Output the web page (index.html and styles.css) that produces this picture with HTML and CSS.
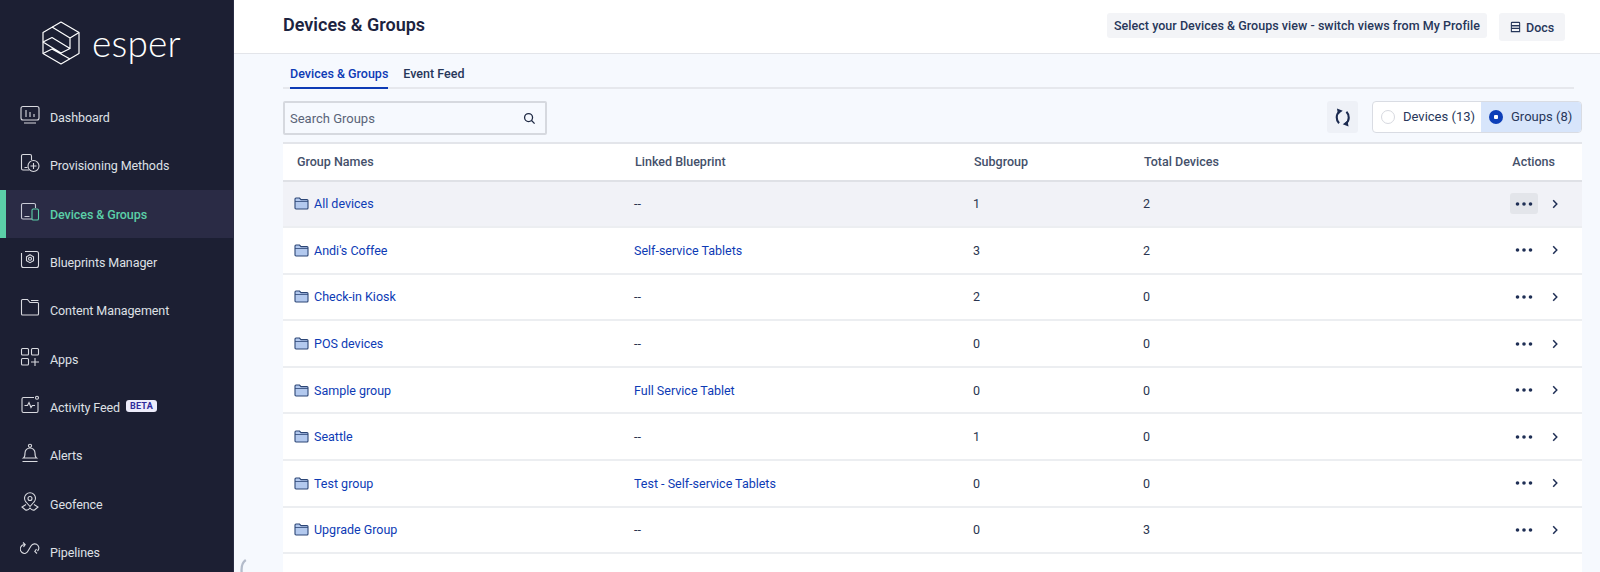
FILE: index.html
```html
<!DOCTYPE html>
<html lang="en">
<head>
<meta charset="utf-8">
<title>Devices &amp; Groups</title>
<link rel="stylesheet" href="styles.css">
</head>
<body>
<svg class="defs" width="0" height="0" aria-hidden="true">
  <symbol id="folder" viewBox="0 0 15 13"><path d="M1 3V2a1 1 0 0 1 1-1h3.500l1.500 1.600h6a1 1 0 0 1 1 1V11a1 1 0 0 1-1 1H2a1 1 0 0 1-1-1z" fill="#b3c9ee" stroke="#2c4676" stroke-width="1.100"/><path d="M1 4.500h13" stroke="#2c4676" stroke-width=".8"/></symbol>
  <symbol id="dots" viewBox="0 0 18 4"><circle cx="2.500" cy="2" r="1.800"/><circle cx="9" cy="2" r="1.800"/><circle cx="15.500" cy="2" r="1.800"/></symbol>
  <symbol id="chev" viewBox="0 0 6 10"><path d="M1.200 1.200 4.800 5 1.200 8.800" fill="none" stroke="#1f2f55" stroke-width="1.500"/></symbol>
</svg>
<div class="app">
  <aside class="sidebar">
    <div class="logo">
      <svg class="logo-mark" viewBox="0 0 40 44" fill="none" stroke="#fff" stroke-width="1.200" stroke-linejoin="round">
        <path d="M20 1 38 11.500v21L20 43 2 32.500v-21z"/>
        <path d="M11 6 29 17V28M29 17 38 11.500M2 21 11 16.500 29 27.500M2 21 20 32 29 27.500M2 32.500 11 28 29 38"/>
      </svg>
      <span class="logo-text">esper</span>
    </div>
    <nav class="nav">
      <a class="nav-item"><svg class="ico" viewBox="0 0 20 20"><rect x="1" y="1.500" width="18" height="13.500" rx="2"/><path d="M6 5v7M10 7v5M14 9v3M4 18h12"/></svg><span>Dashboard</span></a>
      <a class="nav-item"><svg class="ico" viewBox="0 0 20 20"><path d="M9 17H3a1.500 1.500 0 0 1-1.500-1.500V3A1.500 1.500 0 0 1 3 1.500h7A1.500 1.500 0 0 1 11.500 3v4M4.500 14.500h3"/><circle cx="13.500" cy="13" r="5.500"/><path d="M13.500 10v6M10.500 13h6"/></svg><span>Provisioning Methods</span></a>
      <a class="nav-item active"><svg class="ico" viewBox="0 0 20 20"><path d="M12 17H3a1.500 1.500 0 0 1-1.500-1.500V3A1.500 1.500 0 0 1 3 1.500h11A1.500 1.500 0 0 1 15.500 3v3M4.500 14.500h5"/><rect class="teal" x="12" y="7" width="6.500" height="11" rx="1.300"/></svg><span>Devices &amp; Groups</span></a>
      <a class="nav-item"><svg class="ico" viewBox="0 0 20 20"><path d="M5 1.500h11.500a2 2 0 0 1 2 2v12a2 2 0 0 1-2 2H3.500a2 2 0 0 1-2-2V3"/><path d="M10 4.700l3.500 2v4l-3.500 2-3.500-2v-4z"/><circle cx="10" cy="8.700" r="1.500"/></svg><span>Blueprints Manager</span></a>
      <a class="nav-item"><svg class="ico" viewBox="0 0 20 20"><path d="M1.500 16V2.500a1 1 0 0 1 1-1h5l2.500 3h7.500a1 1 0 0 1 1 1V16a1 1 0 0 1-1 1h-15a1 1 0 0 1-1-1zM11 2.500h7.500"/></svg><span>Content Management</span></a>
      <a class="nav-item"><svg class="ico" viewBox="0 0 20 20"><rect x="1.500" y="1.500" width="7" height="6.500" rx="1"/><rect x="11.500" y="1.500" width="7" height="6.500" rx="1"/><rect x="1.500" y="11.500" width="7" height="6.500" rx="1"/><path d="M15 11v8M11 15h8"/></svg><span>Apps</span></a>
      <a class="nav-item"><svg class="ico" viewBox="0 0 20 20"><path d="M14 2.500H3.500a1.500 1.500 0 0 0-1.500 1.500v12a1.500 1.500 0 0 0 1.500 1.500h13a1.500 1.500 0 0 0 1.500-1.500V7M4.500 10.500h3l1.500-3 2 5 1.300-2h2.700"/><circle cx="17" cy="2.700" r="1.500"/></svg><span>Activity Feed</span><b class="beta">BETA</b></a>
      <a class="nav-item"><svg class="ico" viewBox="0 0 20 20"><path d="M3.500 15c1.500-1 1.500-3 1.500-5a5 5 0 0 1 10 0c0 2 0 4 1.500 5zM2.500 18.500h15"/><circle cx="10" cy="2.800" r="1.600"/></svg><span>Alerts</span></a>
      <a class="nav-item"><svg class="ico" viewBox="0 0 20 20"><path d="M10 14.500 6 10a5.500 5.500 0 1 1 8 0z"/><circle cx="10" cy="6.500" r="2"/><path d="M6 12.500l-4 2.500 3.500 3c2 .6 3.500-.6 4.500-2 1 1.400 2.500 2.600 4.500 2l3.500-3-4-2.500"/></svg><span>Geofence</span></a>
      <a class="nav-item"><svg class="ico" viewBox="0 0 20 20"><path d="M5 4.500A4.500 4.500 0 0 0 2 12.500c2.500 2 5 .5 6-1.500l3-5c1.500-2.500 5-3 7-.5 1 1.500 1 4-.5 5.500M3 2.500 5.200 4.600 3.500 7M17 13.500l-2.200-2 1.700-2.500"/></svg><span>Pipelines</span></a>
    </nav>
  </aside>
  <div class="main">
    <header class="topbar">
      <h1 class="title">Devices &amp; Groups</h1>
      <div class="top-right">
        <div class="note">Select your Devices &amp; Groups view - switch views from My Profile</div>
        <a class="docs"><svg class="docs-ico" viewBox="0 0 12 12" fill="none" stroke="#26365a" stroke-width="1.200"><rect x="1.500" y="1" width="9" height="3.500" rx=".7"/><path d="M1.500 4.500h9v3h-9zM1.500 7.500h9V11h-9z"/></svg>Docs</a>
      </div>
    </header>
    <div class="content">
      <div class="tabs">
        <a class="tab on">Devices &amp; Groups</a>
        <a class="tab">Event Feed</a>
      </div>
      <div class="toolbar">
        <label class="search">
          <span class="search-text">Search Groups</span>
          <svg class="search-ico" viewBox="0 0 14 14" fill="none" stroke="#1f2a44" stroke-width="1.400"><circle cx="6" cy="6" r="4.300"/><path d="M9.200 9.200 12.500 12.500"/></svg>
        </label>
        <div class="tools">
          <button class="refresh"><svg viewBox="1 1 14.500 18" fill="none" stroke="#1c2b50" stroke-width="2"><path d="M5 4.500C1.500 7 1.500 12.500 4.500 15.500M11 15.500C14.500 13 14.500 7.500 11.500 4.500"/><path d="M2.500 1.500 8 3.500 3.500 7zM13.500 18.500 8 16.500 12.500 13z" fill="#1c2b50" stroke="none"/></svg></button>
          <div class="segment">
            <div class="seg"><span class="radio"></span>Devices (13)</div>
            <div class="seg sel"><span class="radio"></span>Groups (8)</div>
          </div>
        </div>
      </div>
      <div class="table">
        <div class="row head"><div>Group Names</div><div>Linked Blueprint</div><div>Subgroup</div><div>Total Devices</div><div class="act-head">Actions</div></div>
        <div class="row hl">
          <div class="name"><svg class="folder"><use href="#folder"/></svg><a>All devices</a></div><div>--</div><div>1</div><div>2</div>
          <div class="acts"><span class="more"><svg class="dots"><use href="#dots"/></svg></span><svg class="chev"><use href="#chev"/></svg></div>
        </div>
        <div class="row">
          <div class="name"><svg class="folder"><use href="#folder"/></svg><a>Andi's Coffee</a></div><div><a>Self-service Tablets</a></div><div>3</div><div>2</div>
          <div class="acts"><span class="more"><svg class="dots"><use href="#dots"/></svg></span><svg class="chev"><use href="#chev"/></svg></div>
        </div>
        <div class="row">
          <div class="name"><svg class="folder"><use href="#folder"/></svg><a>Check-in Kiosk</a></div><div>--</div><div>2</div><div>0</div>
          <div class="acts"><span class="more"><svg class="dots"><use href="#dots"/></svg></span><svg class="chev"><use href="#chev"/></svg></div>
        </div>
        <div class="row">
          <div class="name"><svg class="folder"><use href="#folder"/></svg><a>POS devices</a></div><div>--</div><div>0</div><div>0</div>
          <div class="acts"><span class="more"><svg class="dots"><use href="#dots"/></svg></span><svg class="chev"><use href="#chev"/></svg></div>
        </div>
        <div class="row">
          <div class="name"><svg class="folder"><use href="#folder"/></svg><a>Sample group</a></div><div><a>Full Service Tablet</a></div><div>0</div><div>0</div>
          <div class="acts"><span class="more"><svg class="dots"><use href="#dots"/></svg></span><svg class="chev"><use href="#chev"/></svg></div>
        </div>
        <div class="row">
          <div class="name"><svg class="folder"><use href="#folder"/></svg><a>Seattle</a></div><div>--</div><div>1</div><div>0</div>
          <div class="acts"><span class="more"><svg class="dots"><use href="#dots"/></svg></span><svg class="chev"><use href="#chev"/></svg></div>
        </div>
        <div class="row">
          <div class="name"><svg class="folder"><use href="#folder"/></svg><a>Test group</a></div><div><a>Test - Self-service Tablets</a></div><div>0</div><div>0</div>
          <div class="acts"><span class="more"><svg class="dots"><use href="#dots"/></svg></span><svg class="chev"><use href="#chev"/></svg></div>
        </div>
        <div class="row">
          <div class="name"><svg class="folder"><use href="#folder"/></svg><a>Upgrade Group</a></div><div>--</div><div>0</div><div>3</div>
          <div class="acts"><span class="more"><svg class="dots"><use href="#dots"/></svg></span><svg class="chev"><use href="#chev"/></svg></div>
        </div>
      </div>
    </div>
    <svg class="corner-mark" viewBox="0 0 10 14" fill="none" stroke="#b4bccb" stroke-width="2.500"><path d="M8 1C5 3 3 7 3.500 14"/></svg>
  </div>
</div>
</body>
</html>
```
FILE: styles.css
```css
* { box-sizing: border-box; }
html, body { margin: 0; height: 100%; overflow: hidden; }
body { font-family: Roboto, "Noto Sans", sans-serif; font-size: 12.5px; color: #1f2a44; background: #f6f9fe; }
.defs { position: absolute; }
.app { display: flex; height: 572px; }

.sidebar { width: 234px; flex: none; background: #1c1f33; border-right: 1px solid #2a2d44; display: flex; flex-direction: column; overflow: hidden; }
.logo { height: 93.500px; flex: none; padding: 21px 0 0 41px; display: flex; align-items: flex-start; gap: 11px; }
.logo-mark { width: 40px; height: 44px; flex: none; }
.logo-text { font-family: Lato, sans-serif; font-weight: 300; font-size: 37px; line-height: 44px; color: #fff; letter-spacing: .2px; }
.nav { display: flex; flex-direction: column; }
.nav-item { height: 48.300px; flex: none; display: flex; align-items: center; padding-left: 20px; color: #dfe0e6; font-weight: 400; letter-spacing: -.08px; }
.nav-item span { margin-left: 10px; }
.nav-item .ico { width: 20px; height: 20px; flex: none; margin-top: -5px; fill: none; stroke: #d9dae0; stroke-width: 1.100; }
.nav-item.active { background: #2a2b45; color: #5bcfa8; font-weight: 500; box-shadow: inset 6px 0 0 #5bcfa8; }
.nav-item.active .ico { stroke: #c9cbd6; }
.nav-item .ico .teal { stroke: #5bcfa8; }
.beta { margin-left: 6px; margin-top: -2px; padding: 1px 4px; background: #ecebfa; color: #2f2a9c; font-size: 9px; font-weight: 700; border-radius: 3px; letter-spacing: .2px; }

.main { flex: 1; min-width: 0; position: relative; display: flex; flex-direction: column; }
.topbar { height: 54px; flex: none; background: #fff; border-bottom: 1px solid #e3e5ea; display: flex; justify-content: space-between; padding: 12px 35px 0 49px; }
.title { margin: 0; font-size: 18px; line-height: 25px; font-weight: 600; color: #1c2340; }
.top-right { display: flex; align-items: flex-start; gap: 12px; padding-top: 1px; }
.note { height: 25px; padding: 0 7px; background: #f3f4f7; border-radius: 3px; color: #27375a; font-weight: 500; line-height: 25px; white-space: nowrap; letter-spacing: .03px; }
.docs { height: 28px; width: 66px; padding: 0 0 0 11px; display: flex; align-items: center; gap: 5px; background: #f3f4f7; border-radius: 3px; color: #27375a; font-weight: 500; }
.docs-ico { width: 11px; height: 12px; }

.content { flex: 1; padding: 0 18px 0 49px; display: flex; flex-direction: column; }
.tabs { height: 35px; margin-right: 8px; flex: none; display: flex; gap: 15px; padding-left: 7px; border-bottom: 2px solid #e6e8ed; }
.tab { height: 35px; line-height: 40px; font-weight: 500; color: #27375a; }
.tab.on { color: #0d3bb5; border-bottom: 2px solid #0d3bb5; }
.toolbar { height: 53px; flex: none; padding-top: 12px; display: flex; justify-content: space-between; align-items: flex-start; }
.search { width: 264px; height: 34px; border: 2px solid #d6d9df; border-radius: 2px; display: flex; align-items: center; justify-content: space-between; padding: 0 9px 0 5px; }
.search-text { color: #5a6478; font-size: 13px; }
.search-ico { width: 13px; height: 13px; }
.tools { display: flex; gap: 14px; }
.refresh { width: 31px; height: 32px; padding: 0; border: 0; background: #eef1f7; border-radius: 3px; display: flex; align-items: center; justify-content: center; }
.refresh svg { width: 16px; height: 19px; }
.segment { display: flex; height: 32px; width: 210px; border-radius: 4px; border: 1px solid #d9dce3; background: #fff; overflow: hidden; }
.seg { display: flex; align-items: center; gap: 8px; padding: 0 0 2px 8px; font-size: 13px; color: #27375a; white-space: nowrap; }
.seg:first-child { width: 108px; flex: none; }
.seg.sel { flex: 1; background: #d7e5fb; }
.radio { width: 14px; height: 14px; border-radius: 50%; border: 1.500px solid #d7d9df; background: #fff; flex: none; margin-top: 2px; }
.sel .radio { border: 0; background: radial-gradient(circle, #fff 0 2px, #0d3fb8 2.500px); }

.table { background: #fff; border-top: 2px solid #e3e5ea; flex: 1; }
.row { display: grid; grid-template-columns: 338px 339px 170px 1fr 90px; align-items: center; height: 46.600px; border-bottom: 2px solid #eceef1; color: #2a3550; }
.row > div { padding-left: 13px; min-width: 0; }
.row a { color: #0d3bb5; }
.row.head { height: 37.500px; color: #44506a; font-weight: 500; border-bottom-color: #dfe1e6; }
.row.head > div { padding-left: 14px; }
.row.hl { background: #f1f2f7; }
.row.head .act-head { padding-left: 0; padding-right: 27px; text-align: right; }
.name { display: flex; align-items: center; gap: 5px; padding-left: 11px !important; }
.folder { width: 15px; height: 13px; flex: none; }
.row > .acts { display: flex; align-items: center; padding-left: 0; justify-content: flex-end; padding-right: 24px; gap: 14px; }
.more { width: 28px; height: 21px; border-radius: 3px; display: flex; align-items: center; justify-content: center; }
.hl .more { background: #e3e5ea; }
.dots { width: 18px; height: 4px; fill: #1f2f55; margin-right: 1px; }
.chev { width: 6px; height: 10px; }
.corner-mark { position: absolute; left: 4px; bottom: 0; width: 10px; height: 13px; }
```
